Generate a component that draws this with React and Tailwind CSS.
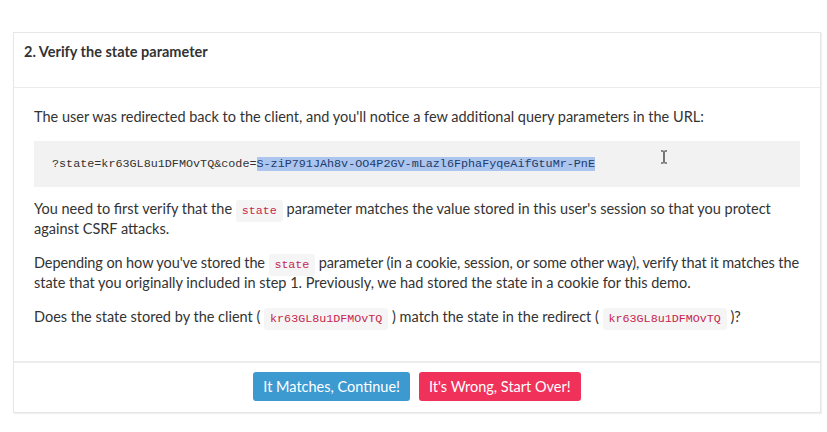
import React from "react";

const STATE = "kr63GL8u1DFMOvTQ";
const CODE = "S-ziP791JAh8v-OO4P2GV-mLazl6FphaFyqeAifGtuMr-PnE";

const Code = ({ children }) => (
  <code className="font-['Liberation_Mono',monospace] text-[11.7px] leading-none text-[#c7254e] bg-[#f5f5f5] rounded-[3px] px-[6px] py-[4px]">
    {children}
  </code>
);

const Line = ({ children }) => (
  <span className="block whitespace-nowrap">{children}</span>
);

export default function App() {
  return (
    <div className="min-h-screen bg-white pt-[32px] pl-[13px] pr-[6px] font-['Lato',sans-serif] text-[#333] text-[14.5px]">
      <div className="w-[808px] border border-[#e6e6e6] shadow-[1px_1px_1px_rgba(0,0,0,0.06)] bg-white">
        {/* Header */}
        <div className="h-[55px] px-[10px] pt-[10px] border-b border-[#ececec]">
          <h3 className="font-bold text-[14.5px] leading-[18px] text-[#333]">
            2. Verify the state parameter
          </h3>
        </div>

        {/* Body */}
        <div className="px-[20px] pt-[19px] pb-[34px] leading-[20px]">
          <p>
            <Line>
              The user was redirected back to the client, and you'll notice a few
              additional query parameters in the URL:
            </Line>
          </p>

          <div className="relative mt-[14px] h-[46px] bg-[#f1f2f1] flex items-center pl-[18px]">
            <pre className="font-['Liberation_Mono',monospace] text-[11.75px] text-[#333]">
              ?state={STATE}&amp;code=
              <span className="bg-[#abc5ee] text-[#1d3b6b]">{CODE}</span>
            </pre>
            {/* text cursor */}
            <svg
              className="absolute left-[626px] top-[9px]"
              width="8"
              height="14"
              viewBox="0 0 8 14"
            >
              <path
                d="M1 1h2.5M4.5 1H7M4 1.5v11M1 13h2.5M4.5 13H7"
                stroke="#222"
                strokeWidth="1.2"
                fill="none"
              />
            </svg>
          </div>

          <p className="mt-[12px]">
            <Line>
              You need to first verify that the <Code>state</Code> parameter
              matches the value stored in this user's session so that you protect
            </Line>
            <Line>against CSRF attacks.</Line>
          </p>

          <p className="mt-[14px]">
            <Line>
              <span className="tracking-[-0.1px]">
                Depending on how you've stored the <Code>state</Code> parameter
                (in a cookie, session, or some other way), verify that it matches
                the
              </span>
            </Line>
            <Line>
              state that you originally included in step 1. Previously, we had
              stored the state in a cookie for this demo.
            </Line>
          </p>

          <p className="mt-[14px]">
            <Line>
              Does the state stored by the client ( <Code>{STATE}</Code> ) match
              the state in the redirect ( <Code>{STATE}</Code> )?
            </Line>
          </p>
        </div>

        {/* Footer */}
        <div className="border-t-2 border-[#ececec] pt-[9px] pb-[11px] flex justify-center gap-[9px]">
          <button className="h-[29px] px-[10px] rounded-[3px] bg-[#3d9ad1] text-white text-[14.5px]">
            It Matches, Continue!
          </button>
          <button className="h-[29px] px-[10px] rounded-[3px] bg-[#f0325a] text-white text-[14.5px]">
            It's Wrong, Start Over!
          </button>
        </div>
      </div>
    </div>
  );
}
